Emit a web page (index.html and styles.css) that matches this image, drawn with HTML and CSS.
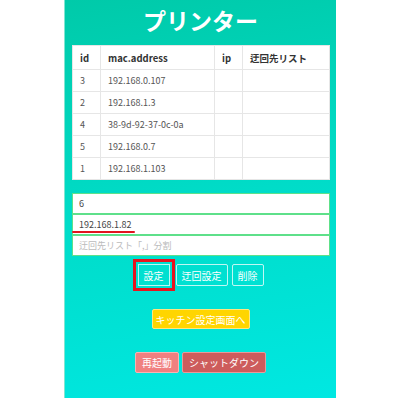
FILE: index.html
```html
<!DOCTYPE html>
<html lang="ja">
<head>
  <meta charset="UTF-8" />
  <meta name="viewport" content="width=device-width, initial-scale=1" />
  <title>プリンター</title>
  <link rel="stylesheet" href="styles.css">
</head>
<body>
  <div class="panel">
    <h1 class="title">プリンター</h1>

    <table class="printer-table">
      <thead>
        <tr><th class="col-id">id</th><th class="col-mac">mac.address</th><th class="col-ip">ip</th><th>迂回先リスト</th></tr>
      </thead>
      <tbody>
        <tr><td>3</td><td>192.168.0.107</td><td></td><td></td></tr>
        <tr><td>2</td><td>192.168.1.3</td><td></td><td></td></tr>
        <tr><td>4</td><td>38-9d-92-37-0c-0a</td><td></td><td></td></tr>
        <tr><td>5</td><td>192.168.0.7</td><td></td><td></td></tr>
        <tr><td>1</td><td>192.168.1.103</td><td></td><td></td></tr>
      </tbody>
    </table>

    <form class="printer-form">
      <input class="field" type="text" value="6" />
      <div class="field-wrap marked">
        <input class="field" type="text" value="192.168.1.82" />
      </div>
      <input class="field" type="text" placeholder="迂回先リスト「,」分割" />

      <div class="btn-row">
        <button type="button" class="btn btn-line highlighted">設定</button>
        <button type="button" class="btn btn-line">迂回設定</button>
        <button type="button" class="btn btn-line">削除</button>
      </div>
    </form>

    <div class="btn-row kitchen-row">
      <button type="button" class="btn btn-yellow">キッチン設定画面へ</button>
    </div>

    <div class="btn-row power-row">
      <button type="button" class="btn btn-pink">再起動</button>
      <button type="button" class="btn btn-red">シャットダウン</button>
    </div>
  </div>
</body>
</html>
```

FILE: styles.css
```css
* { margin: 0; padding: 0; box-sizing: border-box; }
html, body { height: 100%; }
body {
  font-family: "Noto Sans CJK JP", "Noto Sans", sans-serif;
  background: #fff;
  color: #333;
}
.panel {
  width: 272px; min-height: 100%; margin: 0 auto; padding: 0 7px 20px;
  background: linear-gradient(170deg, #00caa9 0%, #00dcc8 50%, #00e8e2 100%);
  border-left: 1px solid #7fe6d2;
}
.title {
  height: 45px; line-height: 40px; text-align: center;
  color: #fff; font-size: 23px; font-weight: 700;
}
.printer-table {
  width: 258px; border-collapse: collapse; background: #fff;
  font-size: 9px; table-layout: fixed;
}
.printer-table th, .printer-table td {
  border: 1px solid #e6e6e6; padding: 0 7px; text-align: left;
  height: 22px; color: #555; font-weight: 400;
}
.printer-table th { height: 24px; color: #333; font-size: 9.5px; font-weight: 700; }
.col-id { width: 28px; }
.col-mac { width: 114px; }
.col-ip { width: 28px; }

.printer-form { margin-top: 13px; }
.field {
  display: block; width: 258px; height: 21px; padding: 0 6px;
  border: 1px solid #5ee08a; background: #fff;
  font-family: inherit; font-size: 9px; color: #444; outline: none;
}
.field::placeholder { color: #bbb; }
.field-wrap { position: relative; }
.marked::after {
  content: ""; position: absolute; left: 0; top: 17px;
  width: 63px; height: 2px; background: #e0141e; border-radius: 1px;
}

.btn-row { display: flex; justify-content: center; gap: 4px; margin-top: 8px; }
.btn {
  height: 22px; padding: 0 5px; font-family: inherit; font-size: 10px;
  color: #fff; border-radius: 2px; cursor: pointer;
}
.btn-line { background: transparent; border: 1px solid rgba(255,255,255,0.75); }
.highlighted { outline: 3px solid #e8141e; outline-offset: 2px; margin-right: 2px; border-radius: 0; }
.kitchen-row { margin-top: 23px; }
.btn-yellow { height: 20px; padding: 0 3px; background: #ffd500; border: 1px solid #ffe680; }
.power-row { margin-top: 23px; gap: 3px; }
.btn-pink { height: 21px; padding: 0 6px; background: #f08080; border: 1px solid #f8b4b4; }
.btn-red { height: 21px; padding: 0 6px; background: #cd5c5c; border: 1px solid #e89a9a; }
```
